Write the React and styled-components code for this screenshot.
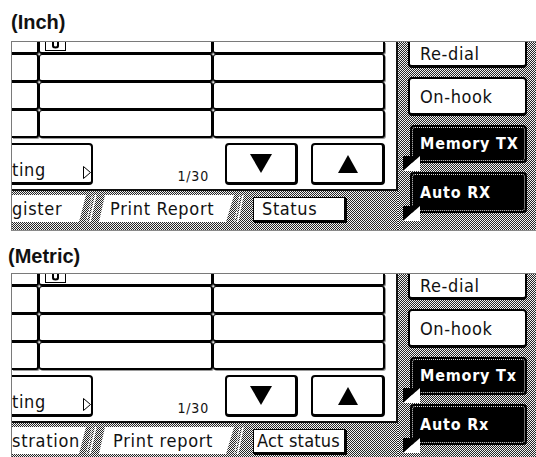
import React from 'react';
import styled, { createGlobalStyle, css } from 'styled-components';

const UI = `"DejaVu Sans Condensed", "DejaVu Sans", sans-serif`;

const checker = css`
  background-color: #f2f2f2;
  background-image: repeating-conic-gradient(#262626 0 25%, #f2f2f2 0 50%);
  background-size: 2px 2px;
`;

const Global = createGlobalStyle`
  html, body { margin: 0; padding: 0; background: #fff; }
  body { width: 536px; height: 457px; overflow: hidden; }
  * { box-sizing: border-box; }
`;

const Page = styled.div`
  display: flex;
  flex-direction: column;
`;

const Caption = styled.h2`
  margin: 0;
  height: ${(p) => p.$h}px;
  padding: ${(p) => p.$top}px 0 0 ${(p) => p.$x}px;
  font: bold 20px/23px "Liberation Sans", Arial, sans-serif;
  color: #111;
`;

const Screen = styled.div`
  margin-left: 11px;
  height: 190px;
  flex: none;
  border-top: 1px solid #7a7a7a;
  border-left: 1px solid #7a7a7a;
  border-bottom: 1px solid #8a8a8a;
  display: flex;
  overflow: hidden;
`;

const LeftArea = styled.div`
  width: 386px;
  display: flex;
  flex-direction: column;
`;

const WhitePanel = styled.div`
  height: 149px;
  background: #fff;
  border-right: 2px solid #111;
  border-bottom: 2px solid #111;
  padding-right: 11px;
  display: flex;
  flex-direction: column;
`;

const Rows = styled.div`
  display: grid;
  grid-template-columns: 27px 174px 172px;
  grid-template-rows: 12px 28px 28px 28px;
`;

const Cell = styled.div`
  position: relative;
  background: #fff;
  border: 1px solid #000;
  border-right-width: 2px;
  border-bottom-width: 2px;
  border-radius: 3px;
  box-shadow: 1px 1px 0 #9a9a9a;
  ${(p) => p.$first && css`
    border-left: none;
    border-top-left-radius: 0;
    border-bottom-left-radius: 0;
  `}
  ${(p) => p.$stub && css`
    border-top: none;
    border-top-left-radius: 0;
    border-top-right-radius: 0;
  `}
`;

const StubIcon = styled.svg`
  position: absolute;
  left: 5px;
  top: -1px;
`;

const ControlRow = styled.div`
  margin-top: 5px;
  height: 42px;
  display: flex;
`;

const FuncKey = styled.div`
  width: 81px;
  background: #fff;
  border: 2px solid #000;
  border-left: none;
  border-bottom-width: 3px;
  border-radius: 0 4px 4px 0;
  display: flex;
  align-items: flex-end;
  justify-content: space-between;
  padding: 0 0 2px 0;
  font: 18px/20px ${UI};
  letter-spacing: 0.6px;
  color: #111;
`;

const Counter = styled.div`
  flex: 1;
  align-self: flex-end;
  text-align: right;
  padding: 0 16px 1px 0;
  font: 14px/16px ${UI};
  letter-spacing: 0.8px;
  color: #111;
`;

const ArrowKey = styled.div`
  width: ${(p) => p.$w}px;
  margin-left: ${(p) => p.$ml || 0}px;
  background: #fff;
  border: 2px solid #000;
  border-bottom-width: 3px;
  border-right-width: 3px;
  border-radius: 4px;
  display: flex;
  align-items: center;
  justify-content: center;
`;

const TabStrip = styled.div`
  flex: 1;
  ${checker};
  display: flex;
  align-items: flex-start;
  padding-top: 4px;
`;

const Tab = styled.div`
  height: 27px;
  width: ${(p) => p.$w}px;
  background: #fff;
  padding-left: ${(p) => p.$pl}px;
  clip-path: ${(p) => p.$clip};
  font: 18px/27px ${UI};
  letter-spacing: 0.7px;
  color: #111;
  white-space: nowrap;
  overflow: hidden;
`;

const Slash = styled.svg`
  flex: none;
  display: block;
`;

const StatusBox = styled.div`
  margin: 2px 0 0 ${(p) => p.$ml}px;
  width: 93px;
  height: 25px;
  background: #fff;
  border: 1px solid #000;
  border-right-width: 2px;
  border-bottom-width: 2px;
  box-shadow: 1px 1px 0 #000;
  padding-left: ${(p) => p.$pl}px;
  font: 18px/21px ${UI};
  letter-spacing: ${(p) => p.$ls}px;
  color: #111;
  white-space: nowrap;
  overflow: hidden;
`;

const RightCol = styled.div`
  flex: 1;
  ${checker};
  padding: 0 9px 0 10px;
  display: flex;
  flex-direction: column;
  gap: 9px;
  overflow: hidden;
`;

const WhiteKey = styled.div`
  flex: none;
  height: 39px;
  background: #fff;
  border: 2px solid #000;
  border-bottom-width: 3px;
  border-radius: 4px;
  display: flex;
  align-items: center;
  padding-left: 10px;
  font: 18px/21px ${UI};
  letter-spacing: 0.6px;
  color: #111;
  ${(p) => p.$cut && css`
    height: 26px;
    border-top: none;
    border-top-left-radius: 0;
    border-top-right-radius: 0;
  `}
`;

const BlackKey = styled.div`
  position: relative;
  flex: none;
  height: ${(p) => p.$h}px;
  margin-left: 2px;
  background: #000;
  border-radius: 4px;
  display: flex;
  align-items: center;
  padding-left: 10px;
  font: bold 16px/18px ${UI};
  letter-spacing: 0.8px;
  color: #fff;
  &::before {
    content: '';
    position: absolute;
    inset: 2px;
    border: 1px dotted #ddd;
    border-radius: 3px;
  }
`;

const Corner = styled.svg`
  position: absolute;
  left: -7px;
  bottom: -8px;
`;

function CornerMark() {
  return (
    <Corner width="17" height="15" viewBox="0 0 17 15">
      <polygon points="0,0 17,0 0,15" fill="#000" />
      <polygon points="17,0 17,15 0,15" fill="#fff" />
    </Corner>
  );
}

function SlashMark({ w }) {
  return (
    <Slash width={w} height="27" viewBox={`0 0 ${w} 27`}>
      <line x1={w * 0.3} y1="27" x2={w * 0.75} y2="0" stroke="#fff" strokeWidth="1.5" />
      <line x1={w * 0.05} y1="27" x2={w * 0.5} y2="0" stroke="#fff" strokeWidth="1" strokeDasharray="2 1" />
    </Slash>
  );
}

function Down() {
  return (
    <svg width="22" height="19" viewBox="0 0 22 19">
      <polygon points="0,0 22,0 11,19" fill="#000" />
    </svg>
  );
}

function Up() {
  return (
    <svg width="20" height="18" viewBox="0 0 20 18">
      <polygon points="10,0 20,18 0,18" fill="#000" />
    </svg>
  );
}

function Outline() {
  return (
    <svg width="8" height="13" viewBox="0 0 8 13" style={{ marginBottom: 1 }}>
      <polygon points="0.5,0.5 7.5,6.5 0.5,12.5" fill="#fff" stroke="#000" strokeWidth="1" />
    </svg>
  );
}

function Panel({ t }) {
  const rows = [0, 1, 2, 3];
  return (
    <Screen>
      <LeftArea>
        <WhitePanel>
          <Rows>
            {rows.map((r) => (
              <React.Fragment key={r}>
                <Cell $first $stub={r === 0} />
                <Cell $stub={r === 0}>
                  {r === 0 && (
                    <StubIcon width="21" height="10" viewBox="0 0 21 10">
                      <rect x="0.5" y="0" width="20" height="9.5" fill="#fff" stroke="#000" />
                      <path d="M7 0 V5 Q7 7.5 10.5 7.5 Q14 7.5 14 5 V0 H12 V4.5 Q12 5.5 10.5 5.5 Q9 5.5 9 4.5 V0 Z" fill="#000" />
                    </StubIcon>
                  )}
                </Cell>
                <Cell $stub={r === 0} />
              </React.Fragment>
            ))}
          </Rows>
          <ControlRow>
            <FuncKey>
              <span>ting</span>
              <Outline />
            </FuncKey>
            <Counter>1/30</Counter>
            <ArrowKey $w={73}>
              <Down />
            </ArrowKey>
            <ArrowKey $w={74} $ml={13}>
              <Up />
            </ArrowKey>
          </ControlRow>
        </WhitePanel>
        <TabStrip>
          <Tab $w={74} $pl={0} $clip="polygon(0 0, 100% 0, calc(100% - 7px) 100%, 0 100%)">
            {t.tab1}
          </Tab>
          <SlashMark w={13} />
          <Tab $w={135} $pl={t.tab2pl} $clip="polygon(6px 0, 100% 0, calc(100% - 8px) 100%, 0 100%)">
            {t.tab2}
          </Tab>
          <SlashMark w={12} />
          <StatusBox $ml={7} $pl={t.statusPl} $ls={t.statusLs}>
            {t.status}
          </StatusBox>
        </TabStrip>
      </LeftArea>
      <RightCol>
        <WhiteKey $cut>Re-dial</WhiteKey>
        <WhiteKey>On-hook</WhiteKey>
        <BlackKey $h={38}>
          {t.mem}
          <CornerMark />
        </BlackKey>
        <BlackKey $h={41}>
          {t.auto}
          <CornerMark />
        </BlackKey>
      </RightCol>
    </Screen>
  );
}

const inch = {
  tab1: 'gister',
  tab2: 'Print Report',
  tab2pl: 11,
  status: 'Status',
  statusPl: 8,
  statusLs: 0.6,
  mem: 'Memory TX',
  auto: 'Auto RX',
};

const metric = {
  tab1: 'stration',
  tab2: 'Print report',
  tab2pl: 14,
  status: 'Act status',
  statusPl: 3,
  statusLs: 0.2,
  mem: 'Memory Tx',
  auto: 'Auto Rx',
};

export default function App() {
  return (
    <Page>
      <Global />
      <Caption $h={41} $top={11} $x={11}>(Inch)</Caption>
      <Panel t={inch} />
      <Caption $h={42} $top={14} $x={8}>(Metric)</Caption>
      <Panel t={metric} />
    </Page>
  );
}
